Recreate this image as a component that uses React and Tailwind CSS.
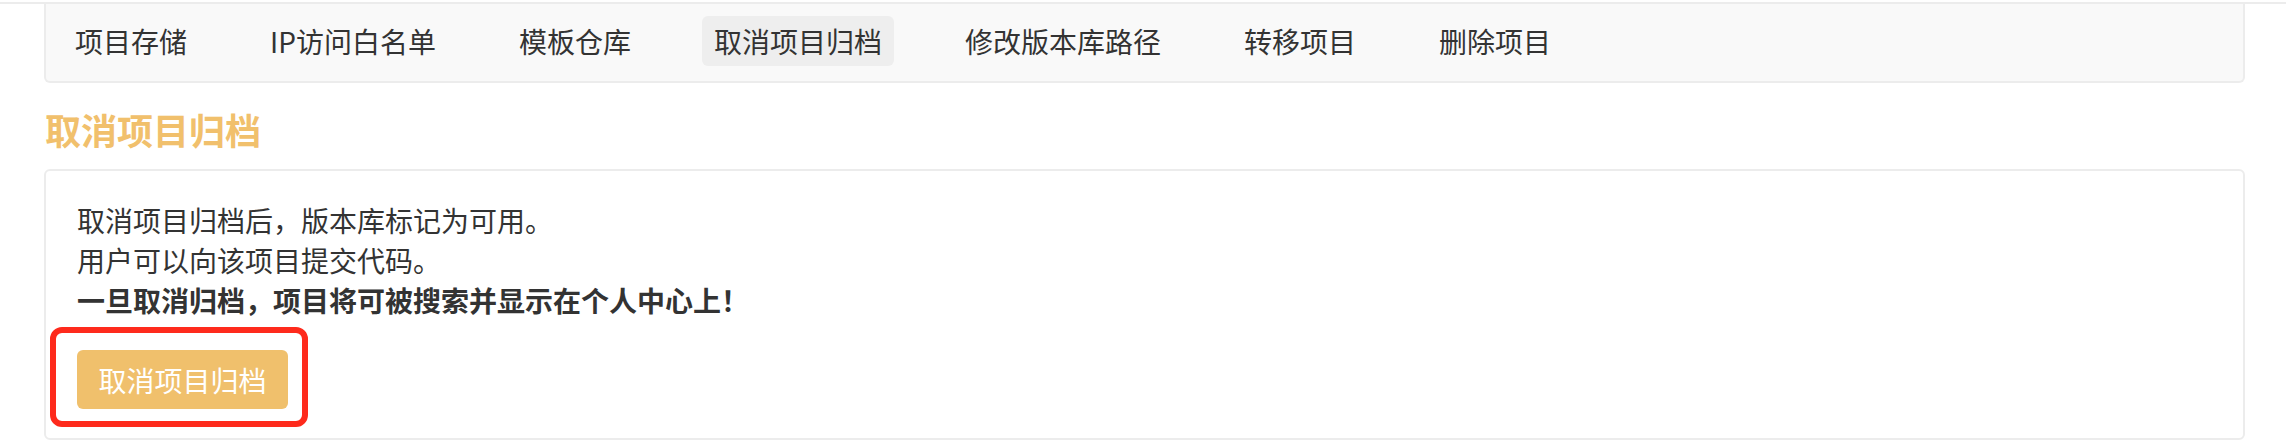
import React from "react";

const tabs = [
  "项目存储",
  "IP访问白名单",
  "模板仓库",
  "取消项目归档",
  "修改版本库路径",
  "转移项目",
  "删除项目",
];

export default function App() {
  const active = "取消项目归档";

  return (
    <div
      className="min-h-screen bg-white pt-[2px] text-[#333]"
      style={{ fontFamily: '"Noto Sans CJK SC", "Noto Sans", sans-serif' }}
    >
      <div className="h-[2px] bg-[#ececec]" />
      <div className="pl-[44px] pr-[41px]">
        <nav className="h-[79px] bg-[#f9f9f9] border-2 border-t-0 border-[#ececec] rounded-b-[6px]">
          <ul className="flex gap-[59px] pl-[17px] pt-[12px]">
            {tabs.map((t) => (
              <li
                key={t}
                className={
                  "px-[12px] py-[5px] text-[28px] leading-[40px] rounded-[6px] " +
                  (t === active ? "bg-[#eeeeee]" : "")
                }
              >
                {t}
              </li>
            ))}
          </ul>
        </nav>

        <h2 className="mt-[22px] pl-[1px] text-[36px] leading-[48px] font-bold text-[#f1c06c]">
          取消项目归档
        </h2>

        <div className="mt-[16px] h-[271px] border-2 border-[#ececec] rounded-[6px] pt-[29px] px-[31px] pb-[29px]">
          <div className="text-[28px] leading-[40px]">
            <p>取消项目归档后，版本库标记为可用。</p>
            <p>用户可以向该项目提交代码。</p>
            <p className="font-bold">一旦取消归档，项目将可被搜索并显示在个人中心上！</p>
          </div>
          <div className="relative inline-block mt-[30px]">
            <button className="h-[59px] w-[211px] rounded-[6px] bg-[#f0c06c] text-white text-[28px] leading-[40px]">
              取消项目归档
            </button>
            <span className="absolute left-[-27px] top-[-23px] right-[-20px] bottom-[-18px] border-[6px] border-[#fe2a1c] rounded-[12px] pointer-events-none" />
          </div>
        </div>
      </div>
    </div>
  );
}
